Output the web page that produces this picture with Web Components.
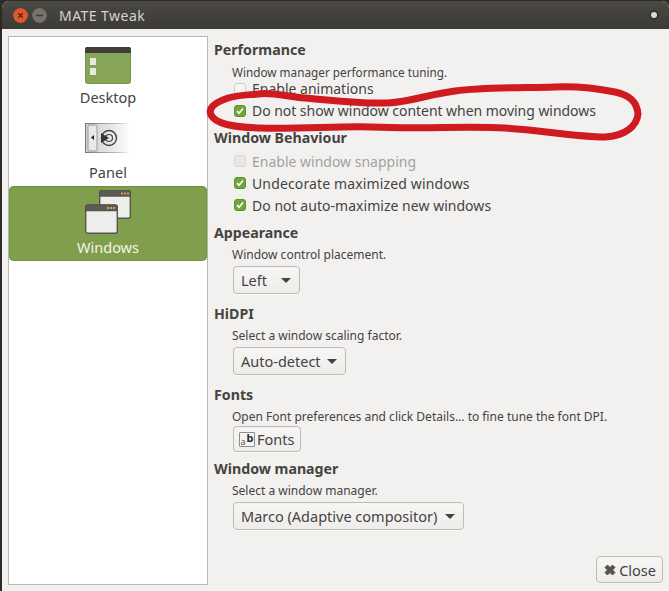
<!DOCTYPE html>
<html><head><meta charset="utf-8">
<style>
html,body{margin:0;padding:0;width:669px;height:591px;overflow:hidden;background:#2e2a28}
body{font-family:"Noto Sans","Open Sans",sans-serif}
</style></head><body>
<template id="t-window"><style>
:host{display:flex;flex-direction:column;position:relative;width:667px;height:590px;margin:1px 0 0 2px;background:#f2f1f0;border-radius:7px 7px 0 0;overflow:hidden;color:#3c3c3c}
.content{flex:1;display:flex;min-height:0;padding:7px 6px 6px 6px}
.main{flex:1;min-width:0;display:flex;flex-direction:column;position:relative;padding-top:4px}
.foot{position:absolute;right:0;bottom:2px}
</style><slot name="title"></slot><div class="content"><slot name="side"></slot><div class="main"><slot></slot><div class="foot"><slot name="foot"></slot></div></div></div><slot name="mark"></slot></template>

<template id="t-title"><style>
:host{display:flex;align-items:center;height:28px;flex:none;background:linear-gradient(#4a4843,#3b3a35);padding:0 12px 0 11px;color:#d6d4cd;font-size:14px;box-sizing:border-box}
.b{width:15px;height:15px;border-radius:50%;display:flex;margin-right:4px}
.t{margin-left:8px;letter-spacing:.45px}
.sp{flex:1}
.dot{width:6px;height:6px;border-radius:50%;background:#d8d8d5;box-shadow:0 0 0 2px #33322e}
</style><svg class="b" viewBox="0 0 15 15"><circle cx="7.5" cy="7.5" r="7.5" fill="#e2582c"/><path d="M5.3 5.3l4.4 4.4M9.7 5.3l-4.4 4.4" stroke="#43261a" stroke-width="1.3"/></svg>
<svg class="b" viewBox="0 0 15 15"><circle cx="7.5" cy="7.5" r="7.5" fill="#75736c"/><path d="M4 7.5h7" stroke="#3c3b36" stroke-width="1.6"/></svg>
<span class="t"><slot></slot></span><span class="sp"></span><span class="dot"></span></template>

<template id="t-side"><style>
:host{display:flex;flex-direction:column;width:198px;flex:none;background:#fff;border:1px solid #b9b7b2;box-sizing:content-box;height:547px}
</style><slot></slot></template>

<template id="t-item"><style>
:host{display:flex;flex-direction:column;align-items:center;justify-content:flex-start;height:75px;font-size:14.5px;color:#45433f;box-sizing:border-box}
:host([selected]){background:#7f9f4d;color:#f3f5e6;border-radius:5px;box-shadow:inset 0 0 0 1px #6f8e41}
.i{display:flex}
.l{line-height:19px}
</style><div class="i"><slot name="icon"></slot></div><div class="l"><slot></slot></div></template>

<template id="t-sec"><style>
:host{display:block;padding-left:6px;font-size:13.4px;color:#45433f}
h3{margin:0;font-size:14.2px;font-weight:700;line-height:20px;color:#45433f}
.b{display:flex;flex-direction:column;align-items:flex-start;padding-left:18px}
</style><h3><slot name="h"></slot></h3><div class="b"><slot></slot></div></template>

<template id="t-note"><style>
:host{display:block;font-size:12px;line-height:17px;color:#45433f;margin-top:3px}
</style><slot></slot></template>

<template id="t-check"><style>
:host{display:flex;align-items:center;height:22px;font-size:14px;color:#45433f;white-space:nowrap}
:host([off]){color:#a3a29e}
.c{width:12px;height:12px;border-radius:3px;margin:0 6px 0 2px;flex:none;box-sizing:border-box;border:1px solid #cfcdc8;background:#f5f5f4;display:flex}
:host([on]) .c{background:#70a63a;border-color:#5f9030}
:host([off]) .c{background:#e9e8e6;border-color:#d8d7d4}
svg{display:none;width:10px;height:10px}
:host([on]) svg{display:block}
</style><span class="c"><svg viewBox="0 0 10 10"><path d="M2 5.200l2 2 4-4.700" fill="none" stroke="#fff" stroke-width="1.7"/></svg></span><slot></slot></template>

<template id="t-btn"><style>
:host{display:inline-flex;align-items:center;box-sizing:border-box;height:28px;margin-left:1px;padding:0 8px 0 7px;border:1px solid #bdbbb6;border-radius:4px;background:linear-gradient(#f7f6f5,#eeedeb);box-shadow:0 1px 0 #fff8;font-size:14.5px;color:#45433f;white-space:nowrap}
.a{display:none;width:0;height:0;border:5px solid transparent;border-top:5px solid #45433f;border-bottom:0;margin-left:var(--gap,6px)}
:host([drop]) .a{display:block}
::slotted(svg),::slotted(font-glyph){margin-right:2px}
</style><slot name="icon"></slot><slot></slot><span class="a"></span></template>

<template id="t-glyph"><style>
:host{display:flex;justify-content:center;gap:1px;box-sizing:border-box;width:16px;height:15px;border:1px solid #8f8d89;border-radius:1px;background:#f6f5f4;font-size:9px;line-height:9px;color:#555}
.a{align-self:flex-end}
.b{align-self:flex-start;font-weight:700;font-size:11px;line-height:9px;color:#2f2f2f}
</style><span class="a">a</span><span class="b">b</span></template>

<mate-window>
  <mate-title slot="title">MATE Tweak</mate-title>
  <mate-side slot="side">
    <mate-item style="height:74px;padding-top:10px"><svg slot="icon" width="46" height="38" viewBox="0 0 46 38"><rect x=".5" y=".5" width="45" height="36" rx="2" fill="#87a556" stroke="#79954b"/><path d="M0 6V2a2 2 0 0 1 2-2h42a2 2 0 0 1 2 2v4z" fill="#3f3d38"/><rect x="5" y="11" width="6" height="7" fill="#e6e9dd"/><rect x="5" y="21" width="6" height="7" fill="#e6e9dd"/></svg><span style="display:block;margin-top:2.500px">Desktop</span></mate-item>
    <mate-item style="padding-top:12px"><svg slot="icon" width="46" height="31" viewBox="0 0 46 31"><defs><linearGradient id="pg"><stop offset="0" stop-color="#cfcfcc"/><stop offset=".6" stop-color="#e8e8e6"/><stop offset="1" stop-color="#fff"/></linearGradient><linearGradient id="pl"><stop offset="0" stop-color="#777"/><stop offset=".7" stop-color="#bbb"/><stop offset="1" stop-color="#fff"/></linearGradient></defs><rect x=".5" y=".5" width="45" height="29" fill="url(#pg)" stroke="url(#pl)"/><rect x="3" y="2" width="9" height="26" rx="1" fill="#e9e9e7" stroke="#9a9a97"/><path d="M6 14.5l3-2.5v5z" fill="#222"/><circle cx="24" cy="15" r="7.5" fill="none" stroke="#444" stroke-width="1.4"/><circle cx="24" cy="15" r="3.5" fill="none" stroke="#444" stroke-width="1.2"/><path d="M16 10l8 5-8 5z" fill="#333"/></svg><span style="display:block;margin-top:9px">Panel</span></mate-item>
    <mate-item selected style="padding-top:4px"><svg slot="icon" width="46" height="44" viewBox="0 0 46 44"><g stroke="#55544f" stroke-width="1.4"><rect x="14.7" y=".7" width="30.6" height="27.600" rx="2" fill="#ededeb"/><path d="M14.7 6V2.500a2 2 0 0 1 2-2h26.600a2 2 0 0 1 2 2V6z" fill="#5c5b56"/><rect x=".7" y="15.200" width="31.600" height="28.100" rx="2" fill="#ededeb"/><path d="M.7 20.500V17a2 2 0 0 1 2-2h27.600a2 2 0 0 1 2 2v3.500z" fill="#5c5b56"/></g><path d="M36 2.500h2v2h-2zM39 2.500h2v2h-2zM42 2.500h2v2h-2zM22 17h2v2h-2zM25 17h2v2h-2zM28 17h2v2h-2z" fill="#d3a24a"/></svg><span style="display:block;margin-top:4px">Windows</span></mate-item>
  </mate-side>

  <mate-sec><span slot="h">Performance</span>
    <mate-note style="margin-top:4px;font-size:11.750px">Window manager performance tuning.</mate-note>
    <mate-check style="height:15px">Enable animations</mate-check>
    <mate-check on style="height:29px;letter-spacing:-.04px">Do not show window content when moving windows</mate-check>
  </mate-sec>
  <mate-sec style="margin-top:3px"><span slot="h">Window Behaviour</span>
    <mate-check off style="margin-top:2px">Enable window snapping</mate-check>
    <mate-check on style="letter-spacing:.14px">Undecorate maximized windows</mate-check>
    <mate-check on style="letter-spacing:.03px">Do not auto-maximize new windows</mate-check>
  </mate-sec>
  <mate-sec style="margin-top:7px"><span slot="h">Appearance</span>
    <mate-note>Window control placement.</mate-note>
    <mate-btn drop style="--gap:14px;margin-top:3px">Left</mate-btn>
  </mate-sec>
  <mate-sec style="margin-top:10px"><span slot="h">HiDPI</span>
    <mate-note>Select a window scaling factor.</mate-note>
    <mate-btn drop style="--gap:6px;margin-top:3px">Auto-detect</mate-btn>
  </mate-sec>
  <mate-sec style="margin-top:10px"><span slot="h">Fonts</span>
    <mate-note>Open Font preferences and click Details... to fine tune the font DPI.</mate-note>
    <mate-btn style="height:26px;margin-top:1px;padding:0 6px 0 5px"><font-glyph slot="icon"></font-glyph>Fonts</mate-btn>
  </mate-sec>
  <mate-sec style="margin-top:7px"><span slot="h">Window manager</span>
    <mate-note>Select a window manager.</mate-note>
    <mate-btn drop style="--gap:8px;margin-top:3px">Marco (Adaptive compositor)</mate-btn>
  </mate-sec>
  <mate-btn slot="foot" style="height:27px;padding:0 6px"><svg slot="icon" width="14" height="14" viewBox="0 0 14 14"><path d="M2 4.500L4.500 2 7 4.500 9.500 2 12 4.500 9.500 7 12 9.500 9.500 12 7 9.500 4.500 12 2 9.500 4.500 7z" fill="#55534f" stroke="#55534f" stroke-linejoin="round"/></svg>Close</mate-btn>
  <red-mark slot="mark"></red-mark>
</mate-window>

<template id="t-mark"><style>
:host{position:absolute;left:-2px;top:-1px;width:669px;height:591px;pointer-events:none;display:block}
</style><svg width="669" height="591" viewBox="0 0 669 591"><path d="M228 98C214 103 208 108 211 115C216 124 232 127 260 128C300 129 340 126 372 127C420 129 470 126 505 128C540 130 575 137 605 137C625 136 637 126 638 114C637 102 630 95 615 92C595 88 575 86 555 87C520 88 485 87 455 91C430 94 410 102 388 103C360 104 330 100 305 98C285 96 270 92 258 94C248 95 238 95 228 98Z" fill="none" stroke="#cf1b20" stroke-width="7" stroke-linejoin="round"/></svg></template>

<script>
const defs={ 'mate-window':'t-window','mate-title':'t-title','mate-side':'t-side','mate-item':'t-item','mate-sec':'t-sec','mate-note':'t-note','mate-check':'t-check','mate-btn':'t-btn','red-mark':'t-mark','font-glyph':'t-glyph'};
for(const [n,id] of Object.entries(defs)){
  customElements.define(n,class extends HTMLElement{constructor(){super();this.attachShadow({mode:'open'}).appendChild(document.getElementById(id).content.cloneNode(true));}});
}
</script>
</body></html>
